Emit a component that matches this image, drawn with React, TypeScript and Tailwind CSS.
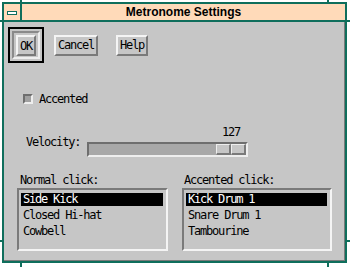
import React from "react";

const mono = "font-['DejaVu_Sans_Mono',monospace] text-[12px] tracking-[-1.2px] text-black";

function Btn({ label, w }: { label: string; w: string }) {
  return (
    <div
      className={`${w} h-[21px] flex items-center justify-center bg-[#c6c6c6] border-2 border-t-[#f4f4f4] border-l-[#f4f4f4] border-r-[#7a7a7a] border-b-[#7a7a7a] leading-[14px] ${mono}`}
    >
      {label}
    </div>
  );
}

function ListBox({ items }: { items: string[] }) {
  return (
    <div className="h-[63px] bg-[#c6c6c6] border-2 border-t-[#7a7a7a] border-l-[#7a7a7a] border-r-[#f4f4f4] border-b-[#f4f4f4] pt-[1px]">
      {items.map((it, i) => (
        <div key={it} className="h-[16px] flex items-center">
          <div
            className={`h-[13px] ml-[2px] mr-[3px] flex-1 pl-[2px] leading-[13px] ${mono} ${
              i === 0 ? "bg-black !text-white" : ""
            }`}
          >
            {it}
          </div>
        </div>
      ))}
    </div>
  );
}

export default function App() {
  return (
    <div className="relative w-[350px] h-[267px] bg-white pl-[2px] pt-[2px] overflow-hidden">
      {/* frame */}
      <div className="w-[345px] h-[261px] border-2 border-[#0f6e5c] flex flex-col">
        {/* title bar */}
        <div className="h-[18px] flex bg-[#ffdab9] border-b-2 border-[#0f6e5c]">
          <div className="w-[18px] h-full border-r-2 border-[#0f6e5c] flex items-center justify-center">
            <div className="w-[10px] h-[4px] mt-[1px] border border-[#0f6e5c] bg-white" />
          </div>
          <div className="flex-1 text-center font-['Liberation_Sans',Arial,sans-serif] font-bold text-[12px] leading-[16px] text-black">
            Metronome Settings
          </div>
        </div>
        {/* content */}
        <div className="flex-1 bg-[#c6c6c6] border-r border-b border-[#7a7a7a] flex flex-col">
          {/* buttons */}
          <div className="mt-[5px] ml-[4px] flex items-center h-[36px]">
            <div className="w-[36px] h-[36px] border-2 border-black p-[2px]">
              <div className="w-full h-full border-2 border-t-[#8a8a8a] border-l-[#8a8a8a] border-r-[#eeeeee] border-b-[#eeeeee] p-[2px] flex">
                <Btn label="OK" w="w-[20px]" />
              </div>
            </div>
            <div className="ml-[10px]">
              <Btn label="Cancel" w="w-[44px]" />
            </div>
            <div className="ml-[18px]">
              <Btn label="Help" w="w-[32px]" />
            </div>
          </div>
          {/* checkbox */}
          <div className="mt-[31px] ml-[19px] h-[10px] flex items-center">
            <div className="w-[10px] h-[10px] bg-[#a0a0a0] border-2 border-t-[#6e6e6e] border-l-[#6e6e6e] border-r-[#eeeeee] border-b-[#eeeeee]" />
            <div className={`ml-[6px] leading-[10px] ${mono}`}>Accented</div>
          </div>
          {/* velocity */}
          <div className="mt-[22px] ml-[22px] flex">
            <div className={`w-[61px] pt-[10px] leading-[12px] ${mono}`}>Velocity:</div>
            <div className="w-[161px] flex flex-col">
              <div className={`h-[12px] leading-[12px] flex justify-end pr-[8px] ${mono}`}>127</div>
              <div className="mt-[4px] h-[15px] bg-[#a8a8a8] border-2 border-t-[#6e6e6e] border-l-[#6e6e6e] border-r-[#eeeeee] border-b-[#eeeeee] flex justify-end">
                <div className="w-[30px] h-full flex">
                  <div className="w-[15px] h-full bg-[#c6c6c6] border-t border-l border-t-[#eeeeee] border-l-[#eeeeee] border-r-2 border-b-2 border-r-[#7a7a7a] border-b-[#7a7a7a]" />
                  <div className="w-[15px] h-full bg-[#c6c6c6] border-t border-l border-t-[#eeeeee] border-l-[#eeeeee] border-r-2 border-b-2 border-r-[#7a7a7a] border-b-[#7a7a7a]" />
                </div>
              </div>
            </div>
          </div>
          {/* lists */}
          <div className="mt-[17px] ml-[13px] flex">
            <div className="w-[151px] flex flex-col">
              <div className={`h-[12px] leading-[12px] pl-[3px] ${mono}`}>Normal click:</div>
              <div className="mt-[2px]">
                <ListBox items={["Side Kick", "Closed Hi-hat", "Cowbell"]} />
              </div>
            </div>
            <div className="w-[150px] ml-[14px] flex flex-col">
              <div className={`h-[12px] leading-[12px] pl-[2px] ${mono}`}>Accented click:</div>
              <div className="mt-[2px]">
                <ListBox items={["Kick Drum 1", "Snare Drum 1", "Tambourine"]} />
              </div>
            </div>
          </div>
        </div>
      </div>
      {/* frame corner ticks */}
      <div className="absolute left-[20px] top-0 w-[2px] h-[2px] bg-[#0f6e5c]" />
      <div className="absolute left-0 top-[20px] w-[2px] h-[2px] bg-[#0f6e5c]" />
      <div className="absolute left-[327px] top-0 w-[2px] h-[2px] bg-[#0f6e5c]" />
      <div className="absolute left-[347px] top-[20px] w-[3px] h-[2px] bg-[#0f6e5c]" />
      <div className="absolute left-0 top-[240px] w-[2px] h-[2px] bg-[#0f6e5c]" />
      <div className="absolute left-[20px] top-[263px] w-[2px] h-[4px] bg-[#0f6e5c]" />
      <div className="absolute left-[347px] top-[240px] w-[3px] h-[2px] bg-[#0f6e5c]" />
      <div className="absolute left-[327px] top-[263px] w-[2px] h-[4px] bg-[#0f6e5c]" />
    </div>
  );
}
